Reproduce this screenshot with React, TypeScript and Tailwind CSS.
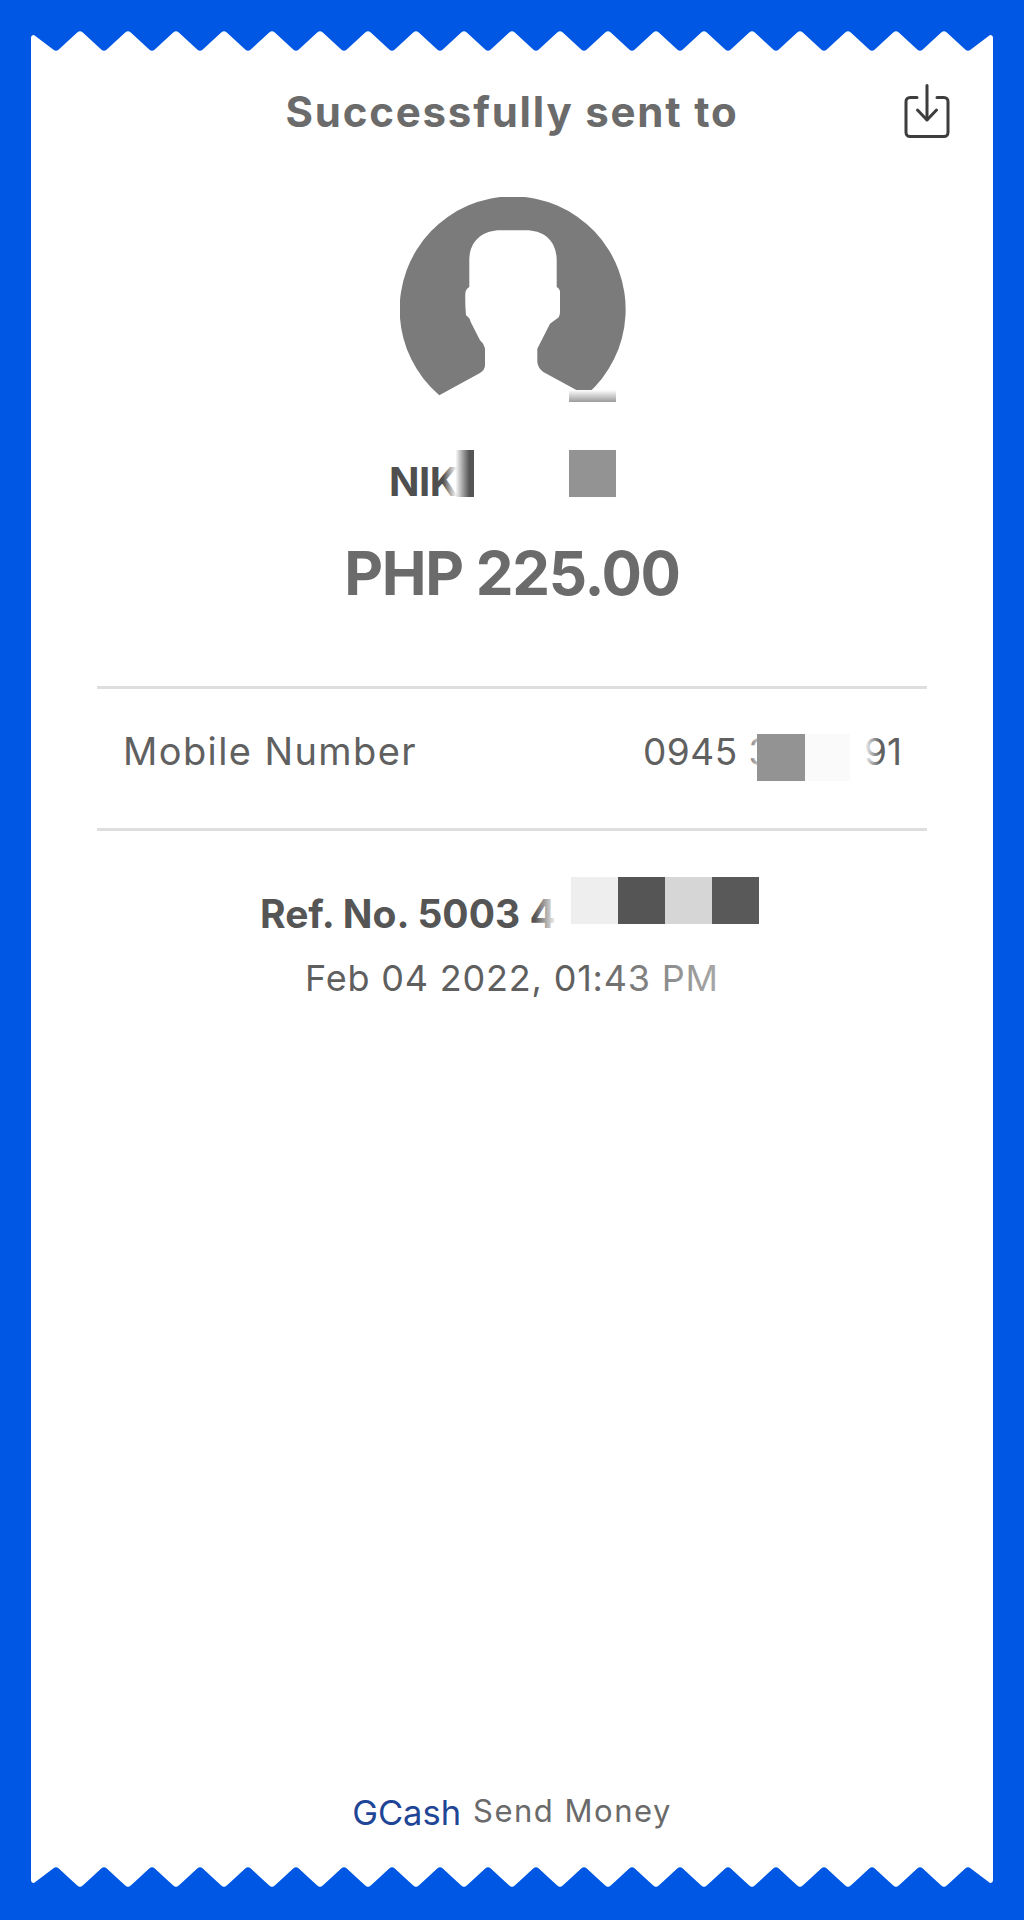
const valleys = Array.from({ length: 20 }, (_, i) => 25 + i * 48);

// white teeth along the torn edge of the receipt
function Zigzag({ flip = false }: { flip?: boolean }) {
  let d = "M0 22V8Q0 5 3 5";
  valleys.forEach((x, i) => {
    d += `L${x - 2.5} 19.7Q${x} 22 ${x + 2.5} 19.7`;
    if (i < valleys.length - 1) d += `L${x + 21.5} 2.3Q${x + 24} 0 ${x + 26.5} 2.3`;
  });
  d += "L959 5Q962 5 962 8V22Z";
  return (
    <svg
      width="962"
      height="22"
      viewBox="0 0 962 22"
      className={flip ? "block shrink-0 -scale-y-100" : "block shrink-0"}
    >
      <path d={d} fill="#fff" />
    </svg>
  );
}

function DownloadIcon() {
  return (
    <svg width="48" height="54" viewBox="0 0 48 54" fill="none" stroke="#3d3d3d" strokeWidth="3" strokeLinecap="round" strokeLinejoin="round">
      <path d="M14 13.5H7a4 4 0 0 0-4 4v31a4 4 0 0 0 4 4h34a4 4 0 0 0 4-4v-31a4 4 0 0 0-4-4h-7" />
      <path d="M24 1.5v34" />
      <path d="M14.5 26l9.5 10 9.5-10" />
    </svg>
  );
}

function Avatar() {
  return (
    <svg width="226" height="199" viewBox="0 0 226 199" className="block">
      <path
        fill="#7b7b7b"
        d="M39.3 198.3L80 176Q85 173 85 168.3V153.3Q85 148 80 143.3L70.7 125Q70 121 66 118.3Q65 108 65.3 96.7Q65.5 92 69.3 90V63.3C69.3 43 84 33.3 100 33.3H126C143 33.3 156.7 43 156.7 63.3V90Q160 92 160 95V115Q160 120 156.7 121.7L150 126.7L137.3 151.7V165Q138 171 143.3 175L186 198.3A113 113 0 1 0 39.3 198.3Z"
      />
    </svg>
  );
}

export default function App() {
  return (
    <div className="h-[1920px] w-[1024px] bg-[#0057e4] px-[31px] pt-[30px] pb-[32px] flex flex-col font-['Inter',sans-serif]">
      <Zigzag />
      <div className="flex-1 bg-white flex flex-col">
        <div className="mt-[30px] h-[60px] grid grid-cols-[1fr_auto_1fr] items-center">
          <div />
          <h1 className="text-[42px] leading-[60px] font-bold tracking-[1.8px] text-[#6b6b6b]">
            Successfully sent to
          </h1>
          <div className="flex justify-end pr-[42px] -mt-[2px]">
            <DownloadIcon />
          </div>
        </div>

        <div className="relative mt-[55px] h-[205px] flex justify-center">
          <div className="ml-[2px]">
            <Avatar />
          </div>
          <div className="absolute left-[538px] top-[193px] h-[12px] w-[47px] bg-gradient-to-b from-white to-[#9c9c9c]" />
        </div>

        <div className="relative mt-[48px] h-[47px] w-[227px] ml-[358px] flex justify-between items-end">
          <span className="text-[40px] leading-[47px] font-bold tracking-[-0.5px] text-[#4f4f4f] translate-y-[8px]">NIK</span>
          <div className="absolute left-[54px] top-0 h-[47px] w-[31px] bg-gradient-to-r from-transparent via-white/90 via-40% to-[#555555] to-85%" />
          <div className="h-[47px] w-[47px] ml-auto bg-[#939393]" />
        </div>

        <div className="mt-[41px] h-[70px] text-center text-[60px] leading-[70px] font-bold tracking-[-1.3px] text-[#6b6b6b]">
          PHP 225.00
        </div>

        <div className="mt-[78px] mx-[66px] h-[145px] border-y-[3px] border-[#dedede] pl-[26px] pr-[25px] pb-[14px] flex items-center justify-between text-[#606060]">
          <span className="text-[38px] tracking-[1.4px]">Mobile Number</span>
          <div className="flex items-center text-[37px] tracking-[0.5px]">
            <span className="relative w-[114px] whitespace-nowrap">
              0945 3
              <span className="absolute right-0 top-0 h-full w-[10px] bg-gradient-to-r from-transparent to-white/60" />
            </span>
            <div className="h-[47px] w-[48px] translate-y-[6px] bg-[#939393]" />
            <div className="h-[47px] w-[45px] translate-y-[6px] bg-[#fafafa]" />
            <span className="relative ml-[14px] tracking-[0px]">
              91
              <span className="absolute left-0 top-0 h-full w-[16px] bg-gradient-to-r from-white to-transparent" />
            </span>
          </div>
        </div>

        <div className="mt-[53px] h-[60px] pl-[229px] flex items-center">
          <span className="relative w-[311px] whitespace-nowrap text-[39px] leading-[60px] font-bold text-[#555555]">
            Ref. No. 5003 4
            <span className="absolute right-[14px] top-0 h-full w-[22px] bg-gradient-to-r from-transparent to-white" />
          </span>
          <div className="self-start -mt-[7px] flex">
            <div className="h-[47px] w-[47px] bg-[#eeeeee]" />
            <div className="h-[47px] w-[47px] bg-[#555555]" />
            <div className="h-[47px] w-[47px] bg-[#d6d6d6]" />
            <div className="h-[47px] w-[47px] bg-[#595959]" />
          </div>
        </div>

        <div className="mt-[9px] relative h-[50px] text-center text-[36px] leading-[50px] tracking-[0.8px] text-[#5f5f5f]">
          Feb 04 2022, 01:43 PM
          <div className="absolute left-[550px] top-0 h-[50px] w-[150px] bg-gradient-to-r from-transparent to-white/50" />
        </div>

        <div className="mt-auto mb-[28px] h-[50px] flex items-center justify-center gap-[12px]">
          <span className="text-[34.5px] text-[#1f4596]">GCash</span>
          <span className="text-[31px] tracking-[1.5px] text-[#6a6a6a] -translate-y-[2px]">Send Money</span>
        </div>
      </div>
      <Zigzag flip />
    </div>
  );
}
